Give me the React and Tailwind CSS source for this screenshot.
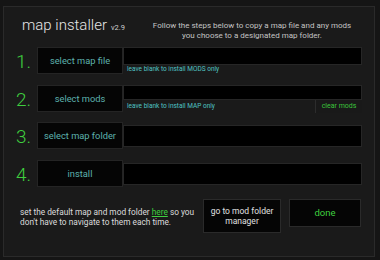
import React from "react";

const steps = [
  { n: "1.", label: "select map file", note: "leave blank to install MODS only" },
  { n: "2.", label: "select mods", note: "leave blank to install MAP only", clear: true },
  { n: "3.", label: "select map folder", inset: true },
  { n: "4.", label: "install", inset: true },
];

function StepRow({ step, top }) {
  return (
    <div className={`flex ${top} h-[28px]`}>
      <div className="w-[21px] ml-[12px] flex items-center text-[19px] leading-none text-[#3fcf3f] font-light">
        {step.n}
      </div>
      <div className="w-[86px] h-[27px] bg-[#050505] border border-[#242424] flex items-center justify-center text-[9.3px] text-[#5db2ae]">
        {step.label}
      </div>
      <div className={`w-[239px] flex flex-col ${step.inset ? "pt-[3px]" : ""}`}>
        <div className="h-[22px] bg-black border border-[#262626]" />
        {step.note && (
          <div className="h-[13px] flex items-center justify-between">
            <span className="pl-[4px] text-[6.5px] text-[#4fc3c3]">{step.note}</span>
            {step.clear && (
              <span className="h-[13px] w-[47px] border-l border-[#2c2c2c] bg-[#191919] flex items-center justify-center text-[7px] text-[#3bc43b]">
                clear mods
              </span>
            )}
          </div>
        )}
      </div>
    </div>
  );
}

export default function App() {
  return (
    <div
      className="w-[380px] h-[260px] bg-[#151515] pt-[6px] pl-[3px] overflow-hidden"
      style={{ fontFamily: "Roboto, 'Liberation Sans', sans-serif" }}
    >
      <div className="w-[372px] h-[251px] border border-[#2a2a2a] bg-[#1a1a1a] flex flex-col">
        {/* header */}
        <div className="h-[39px] flex">
          <div className="pl-[18px] pt-[7px] flex items-baseline">
            <span className="text-[15px] font-light text-[#e6e6e6]">map installer</span>
            <span className="ml-[4px] text-[7.5px] text-[#cfcfcf]">v2.9</span>
          </div>
          <div className="ml-auto mr-[22px] pt-[14px] w-[200px] text-center text-[8px] leading-[10px] text-[#c4c4c4]">
            Follow the steps below to copy a map file and any mods
            <br />
            you choose to a designated map folder.
          </div>
        </div>

        <StepRow step={steps[0]} top="mt-[1px]" />
        <StepRow step={steps[1]} top="mt-[10px]" />
        <StepRow step={steps[2]} top="mt-[9px]" />
        <StepRow step={steps[3]} top="mt-[10px]" />

        {/* footer */}
        <div className="flex mt-[11px]">
          <div className="pl-[16px] pt-[8px] w-[199px] text-[8.3px] leading-[10px] text-[#dcdcdc]">
            set the default map and mod folder{" "}
            <span className="text-[#3fcf3f] underline">here</span> so you
            <br />
            don't have to navigate to them each time.
          </div>
          <div className="w-[78px] h-[34px] bg-[#050505] border border-[#2a2a2a] flex items-center justify-center text-center text-[8.5px] leading-[10px] text-[#e0e0e0]">
            go to mod folder
            <br />
            manager
          </div>
          <div className="ml-[8px] w-[72px] h-[28px] bg-[#050505] border border-[#2a2a2a] flex items-center justify-center text-[9.5px] text-[#3fcf3f]">
            done
          </div>
        </div>
      </div>
    </div>
  );
}
